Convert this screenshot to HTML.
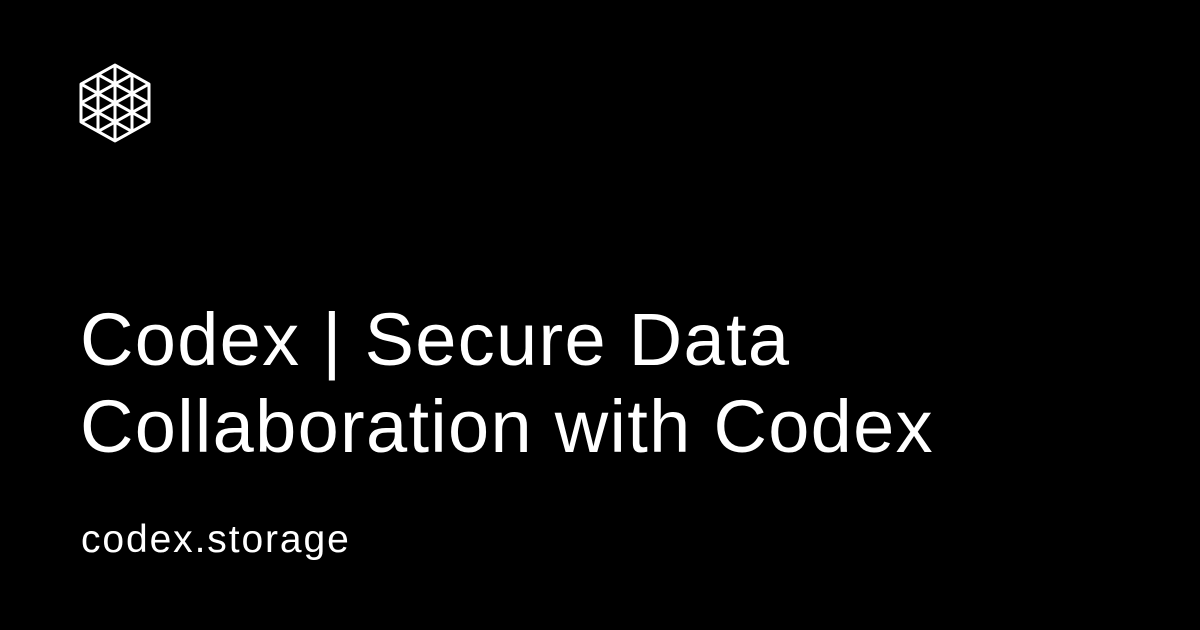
<!DOCTYPE html>
<html><head><style>
html,body{margin:0;padding:0;background:#000;}
body{width:1200px;height:630px;position:relative;overflow:hidden;font-family:"Liberation Sans",sans-serif;color:#fff;}
.t{position:absolute;left:80px;font-size:74px;line-height:87px;top:296px;white-space:nowrap;letter-spacing:1.3px;}
.u{position:absolute;left:81px;top:518px;font-size:39px;white-space:nowrap;letter-spacing:1.9px;}
</style></head><body>
<svg width="1200" height="630" style="position:absolute;left:0;top:0">
<defs><clipPath id="h"><polygon points="115,65 149,84 149,122 115,141 81,122 81,84"/></clipPath></defs>
<g stroke="#fff" stroke-width="3" fill="none">
<g clip-path="url(#h)">
<line x1="98" y1="50" x2="98" y2="160"/><line x1="115" y1="50" x2="115" y2="160"/><line x1="132" y1="50" x2="132" y2="160"/>
<line x1="47" y1="46" x2="183" y2="122"/><line x1="47" y1="65" x2="183" y2="141"/><line x1="47" y1="84" x2="183" y2="160"/><line x1="47" y1="27" x2="183" y2="103"/><line x1="47" y1="8" x2="183" y2="84"/><line x1="47" y1="103" x2="183" y2="179"/>
<line x1="47" y1="122" x2="183" y2="46"/><line x1="47" y1="141" x2="183" y2="65"/><line x1="47" y1="160" x2="183" y2="84"/><line x1="47" y1="103" x2="183" y2="27"/><line x1="47" y1="84" x2="183" y2="8"/><line x1="47" y1="179" x2="183" y2="103"/>
</g>
<polygon points="115,65 149,84 149,122 115,141 81,122 81,84" stroke-linejoin="round"/>
</g></svg>
<div class="t">Codex | Secure Data<br>Collaboration with Codex</div>
<div class="u">codex.storage</div>
</body></html>
